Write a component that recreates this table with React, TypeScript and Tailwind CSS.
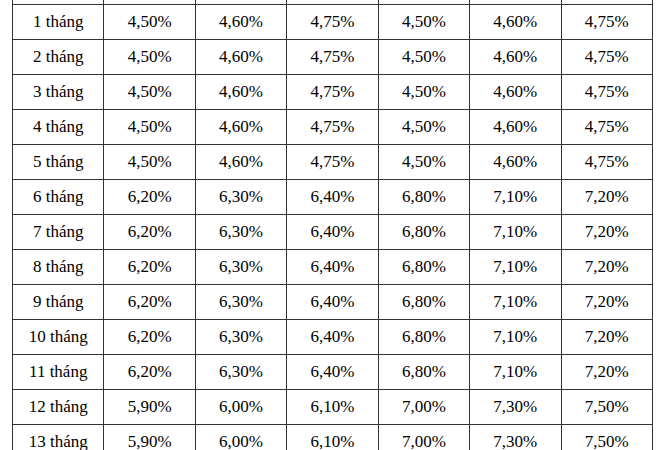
const rows: [string, string[]][] = [
  ["1 tháng", ["4,50%", "4,60%", "4,75%", "4,50%", "4,60%", "4,75%"]],
  ["2 tháng", ["4,50%", "4,60%", "4,75%", "4,50%", "4,60%", "4,75%"]],
  ["3 tháng", ["4,50%", "4,60%", "4,75%", "4,50%", "4,60%", "4,75%"]],
  ["4 tháng", ["4,50%", "4,60%", "4,75%", "4,50%", "4,60%", "4,75%"]],
  ["5 tháng", ["4,50%", "4,60%", "4,75%", "4,50%", "4,60%", "4,75%"]],
  ["6 tháng", ["6,20%", "6,30%", "6,40%", "6,80%", "7,10%", "7,20%"]],
  ["7 tháng", ["6,20%", "6,30%", "6,40%", "6,80%", "7,10%", "7,20%"]],
  ["8 tháng", ["6,20%", "6,30%", "6,40%", "6,80%", "7,10%", "7,20%"]],
  ["9 tháng", ["6,20%", "6,30%", "6,40%", "6,80%", "7,10%", "7,20%"]],
  ["10 tháng", ["6,20%", "6,30%", "6,40%", "6,80%", "7,10%", "7,20%"]],
  ["11 tháng", ["6,20%", "6,30%", "6,40%", "6,80%", "7,10%", "7,20%"]],
  ["12 tháng", ["5,90%", "6,00%", "6,10%", "7,00%", "7,30%", "7,50%"]],
  ["13 tháng", ["5,90%", "6,00%", "6,10%", "7,00%", "7,30%", "7,50%"]],
];

const cell = "border border-[#333] h-[35px] p-0 pb-[2px] text-center align-middle";

export default function App() {
  return (
    <div className="h-[450px] overflow-hidden bg-white">
      <table
        className="ml-[12px] -mt-[31px] w-[641px] table-fixed border-collapse text-[17px] leading-none text-black"
        style={{ fontFamily: '"Liberation Serif", "Times New Roman", serif' }}
      >
        <tbody>
          {/* header row, scrolled out of view */}
          <tr>
            {Array.from({ length: 7 }).map((_, i) => (
              <td key={i} className={cell}></td>
            ))}
          </tr>
          {rows.map(([term, rates]) => (
            <tr key={term}>
              <td className={cell}>{term}</td>
              {rates.map((r, i) => (
                <td key={i} className={cell}>
                  {r}
                </td>
              ))}
            </tr>
          ))}
        </tbody>
      </table>
    </div>
  );
}
